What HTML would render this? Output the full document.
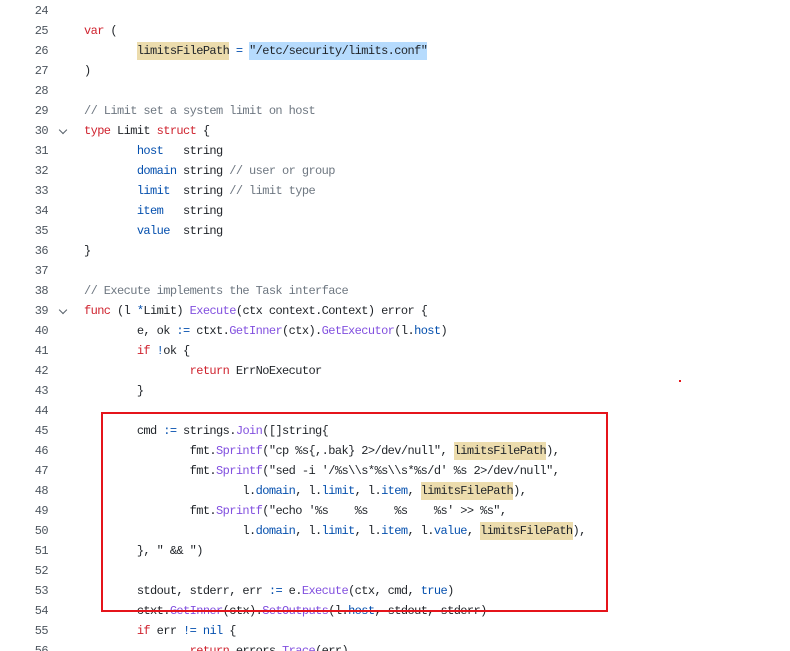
<!DOCTYPE html>
<html><head><meta charset="utf-8"><style>
html,body{margin:0;padding:0;background:#fff;width:790px;height:651px;overflow:hidden;position:relative}
.l{position:absolute;left:0;height:20px;line-height:20px;width:790px;font-family:"Liberation Mono",monospace;font-size:12px;letter-spacing:-0.6px;color:#1f2328;white-space:pre;tab-size:8;-moz-tab-size:8}
.n{position:absolute;left:0;width:48px;text-align:right;color:#4d555e}
.c{position:absolute;left:84px}
.k{color:#cf222e}.b{color:#0550ae}.p{color:#8250df}.g{color:#6e7781}
.h{background:#ecdcad;padding:2px 0}.s{background:#b6dbfd;padding:2px 0}
.chev{position:absolute;left:60px;top:6px;width:5px;height:5px;border-right:1.3px solid #57606a;border-bottom:1.3px solid #57606a;transform:rotate(45deg)}
.box{position:absolute;left:101px;top:412px;width:503px;height:196px;border:2px solid #e5141b}
.dot{position:absolute;left:679px;top:380px;width:2px;height:2px;background:#e5141b}
</style></head><body>
<div class="l" style="top:1px"><span class="n">24</span><span class="c"></span></div>
<div class="l" style="top:21px"><span class="n">25</span><span class="c"><span class="k">var</span> (</span></div>
<div class="l" style="top:41px"><span class="n">26</span><span class="c">	<span class="h">limitsFilePath</span> <span class="b">=</span> <span class="s">"/etc/security/limits.conf"</span></span></div>
<div class="l" style="top:61px"><span class="n">27</span><span class="c">)</span></div>
<div class="l" style="top:81px"><span class="n">28</span><span class="c"></span></div>
<div class="l" style="top:101px"><span class="n">29</span><span class="c"><span class="g">// Limit set a system limit on host</span></span></div>
<div class="l" style="top:121px"><span class="n">30</span><span class="chev"></span><span class="c"><span class="k">type</span> Limit <span class="k">struct</span> {</span></div>
<div class="l" style="top:141px"><span class="n">31</span><span class="c">	<span class="b">host</span>   string</span></div>
<div class="l" style="top:161px"><span class="n">32</span><span class="c">	<span class="b">domain</span> string <span class="g">// user or group</span></span></div>
<div class="l" style="top:181px"><span class="n">33</span><span class="c">	<span class="b">limit</span>  string <span class="g">// limit type</span></span></div>
<div class="l" style="top:201px"><span class="n">34</span><span class="c">	<span class="b">item</span>   string</span></div>
<div class="l" style="top:221px"><span class="n">35</span><span class="c">	<span class="b">value</span>  string</span></div>
<div class="l" style="top:241px"><span class="n">36</span><span class="c">}</span></div>
<div class="l" style="top:261px"><span class="n">37</span><span class="c"></span></div>
<div class="l" style="top:281px"><span class="n">38</span><span class="c"><span class="g">// Execute implements the Task interface</span></span></div>
<div class="l" style="top:301px"><span class="n">39</span><span class="chev"></span><span class="c"><span class="k">func</span> (l <span class="b">*</span>Limit) <span class="p">Execute</span>(ctx context.Context) error {</span></div>
<div class="l" style="top:321px"><span class="n">40</span><span class="c">	e, ok <span class="b">:=</span> ctxt.<span class="p">GetInner</span>(ctx).<span class="p">GetExecutor</span>(l.<span class="b">host</span>)</span></div>
<div class="l" style="top:341px"><span class="n">41</span><span class="c">	<span class="k">if</span> <span class="b">!</span>ok {</span></div>
<div class="l" style="top:361px"><span class="n">42</span><span class="c">		<span class="k">return</span> ErrNoExecutor</span></div>
<div class="l" style="top:381px"><span class="n">43</span><span class="c">	}</span></div>
<div class="l" style="top:401px"><span class="n">44</span><span class="c"></span></div>
<div class="l" style="top:421px"><span class="n">45</span><span class="c">	cmd <span class="b">:=</span> strings.<span class="p">Join</span>([]string{</span></div>
<div class="l" style="top:441px"><span class="n">46</span><span class="c">		fmt.<span class="p">Sprintf</span>("cp %s{,.bak} 2&gt;/dev/null", <span class="h">limitsFilePath</span>),</span></div>
<div class="l" style="top:461px"><span class="n">47</span><span class="c">		fmt.<span class="p">Sprintf</span>("sed -i '/%s\\s*%s\\s*%s/d' %s 2&gt;/dev/null",</span></div>
<div class="l" style="top:481px"><span class="n">48</span><span class="c">			l.<span class="b">domain</span>, l.<span class="b">limit</span>, l.<span class="b">item</span>, <span class="h">limitsFilePath</span>),</span></div>
<div class="l" style="top:501px"><span class="n">49</span><span class="c">		fmt.<span class="p">Sprintf</span>("echo '%s    %s    %s    %s' &gt;&gt; %s",</span></div>
<div class="l" style="top:521px"><span class="n">50</span><span class="c">			l.<span class="b">domain</span>, l.<span class="b">limit</span>, l.<span class="b">item</span>, l.<span class="b">value</span>, <span class="h">limitsFilePath</span>),</span></div>
<div class="l" style="top:541px"><span class="n">51</span><span class="c">	}, " &amp;&amp; ")</span></div>
<div class="l" style="top:561px"><span class="n">52</span><span class="c"></span></div>
<div class="l" style="top:581px"><span class="n">53</span><span class="c">	stdout, stderr, err <span class="b">:=</span> e.<span class="p">Execute</span>(ctx, cmd, <span class="b">true</span>)</span></div>
<div class="l" style="top:601px"><span class="n">54</span><span class="c">	ctxt.<span class="p">GetInner</span>(ctx).<span class="p">SetOutputs</span>(l.<span class="b">host</span>, stdout, stderr)</span></div>
<div class="l" style="top:621px"><span class="n">55</span><span class="c">	<span class="k">if</span> err <span class="b">!=</span> <span class="b">nil</span> {</span></div>
<div class="l" style="top:641px"><span class="n">56</span><span class="c">		<span class="k">return</span> errors.<span class="p">Trace</span>(err)</span></div>
<div class="box"></div>
<div class="dot"></div>
</body></html>
